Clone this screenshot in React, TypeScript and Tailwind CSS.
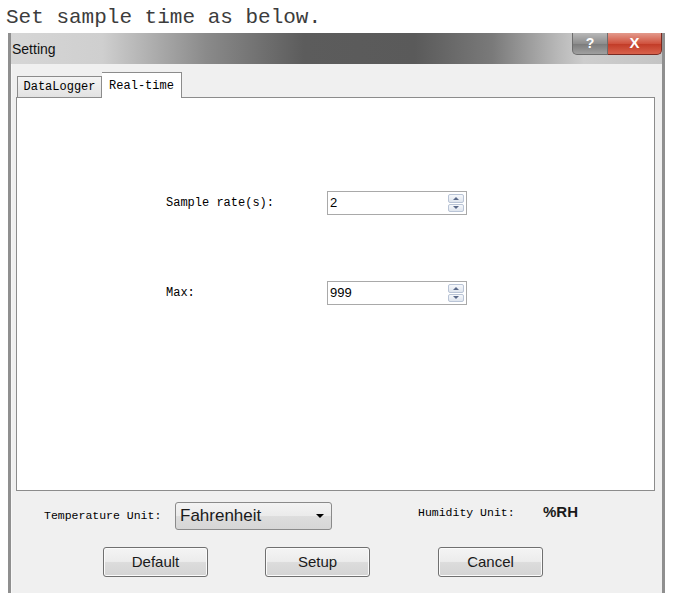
import React from "react";

const mono = { fontFamily: '"Liberation Mono", "DejaVu Sans Mono", monospace' };

function Spin() {
  return (
    <div className="flex flex-col w-[16px] h-[18px] mr-[2px] gap-[1px]">
      <div className="flex-1 flex items-center justify-center border border-[#b9c4d6] rounded-[2px] bg-[linear-gradient(#f6f8fb,#dfe5ee)]">
        <div className="w-0 h-0 border-x-[3px] border-x-transparent border-b-[3px] border-b-[#5b6a8a]" />
      </div>
      <div className="flex-1 flex items-center justify-center border border-[#b9c4d6] rounded-[2px] bg-[linear-gradient(#f6f8fb,#dfe5ee)]">
        <div className="w-0 h-0 border-x-[3px] border-x-transparent border-t-[3px] border-t-[#5b6a8a]" />
      </div>
    </div>
  );
}

function NumField({ value }: { value: string }) {
  return (
    <div className="w-[140px] h-[24px] border border-[#a9a9a9] bg-white flex items-center justify-between">
      <span className="pl-[2px] text-[13px] text-black" style={{ fontFamily: '"Liberation Sans", Arial, sans-serif' }}>
        {value}
      </span>
      <Spin />
    </div>
  );
}

function Btn({ label }: { label: string }) {
  return (
    <div
      className="w-[105px] h-[30px] rounded-[3px] border border-[#707070] bg-[linear-gradient(#f4f4f4_0%,#ececec_48%,#dcdcdc_52%,#d4d4d4_100%)] flex items-center justify-center text-[15px] text-[#1a1a1a] shadow-[inset_0_0_0_1px_#fbfbfb]"
      style={{ fontFamily: '"Liberation Sans", Arial, sans-serif' }}
    >
      {label}
    </div>
  );
}

export default function App() {
  return (
    <div className="w-[685px] h-[599px] bg-white overflow-hidden flex flex-col">
      <div className="h-[33px] pl-[6px] text-[21px] leading-[36px] text-[#3c3c3c] whitespace-pre" style={mono}>
        Set sample time as below.
      </div>
      <div className="ml-[8px] w-[657px] h-[560px] flex flex-col border-x-[3px] border-x-[#8f8f8f]">
        {/* title bar */}
        <div className="h-[31px] flex justify-between bg-[linear-gradient(90deg,#d6d6d6_0%,#cfcfcf_14%,#8a8a8a_30%,#5c5c5c_45%,#5a5a5a_62%,#7a7a7a_74%,#b8b8b8_84%,#cdcdcd_88%,#c4c4c4_100%)]">
          <div className="pl-[1px] pt-[6px] text-[14px] text-[#111]" style={{ fontFamily: '"Liberation Sans", Arial, sans-serif' }}>
            Setting
          </div>
          <div className="flex h-[22px]">
            <div className="w-[36px] h-full rounded-bl-[5px] border border-[#6d6d6d] border-t-0 bg-[linear-gradient(#b8b8b8,#8e8e8e_50%,#7a7a7a_51%,#a0a0a0)] flex items-center justify-center text-white text-[14px] font-bold" style={{ fontFamily: '"Liberation Sans", Arial, sans-serif' }}>
              ?
            </div>
            <div className="w-[54px] h-full rounded-br-[5px] border border-[#7a2a22] border-t-0 border-l-0 bg-[linear-gradient(#e39a8c,#d0533f_50%,#c13a26_51%,#d8624c)] flex items-center justify-center text-white text-[15px] font-bold" style={{ fontFamily: '"Liberation Sans", Arial, sans-serif' }}>
              X
            </div>
          </div>
        </div>
        {/* body */}
        <div className="flex-1 bg-[#f0f0f0] border-l border-l-[#f8f8f8] flex flex-col">
          {/* tabs */}
          <div className="flex items-end h-[33px] pl-[5px] pt-[7px]">
            <div className="w-[85px] h-[21px] border border-[#8c8c8c] border-b-0 bg-[linear-gradient(#f4f4f4,#e2e2e2)] flex items-center justify-center text-[12px] text-black" style={mono}>
              DataLogger
            </div>
            <div className="w-[80px] h-[26px] border border-[#8c8c8c] border-b-0 border-l-0 bg-white flex items-start justify-center pt-[4px] text-[12px] text-black relative top-[1px]" style={mono}>
              Real-time
            </div>
          </div>
          <div className="ml-[4px] w-[639px] h-[394px] bg-white border border-[#8c8c8c] flex flex-col">
            <div className="h-[93px]" />
            <div className="flex items-center">
              <div className="w-[149px]" />
              <div className="w-[161px] text-[12px] text-black" style={mono}>
                Sample rate(s):
              </div>
              <NumField value="2" />
            </div>
            <div className="h-[66px]" />
            <div className="flex items-center">
              <div className="w-[149px]" />
              <div className="w-[161px] text-[12px] text-black" style={mono}>
                Max:
              </div>
              <NumField value="999" />
            </div>
          </div>
          {/* unit row */}
          <div className="flex items-center mt-[11px] h-[28px] pl-[32px]">
            <div className="w-[131px] text-[11.5px] text-black" style={mono}>
              Temperature Unit:
            </div>
            <div
              className="w-[157px] h-[28px] rounded-[3px] border border-[#8a8a8a] bg-[linear-gradient(#f3f3f3_0%,#ebebeb_48%,#dddddd_52%,#d6d6d6_100%)] flex items-center justify-between pl-[4px] pr-[7px] text-[17px] text-[#1a1a1a]"
              style={{ fontFamily: '"Liberation Sans", Arial, sans-serif' }}
            >
              <span>Fahrenheit</span>
              <div className="w-0 h-0 border-x-[4px] border-x-transparent border-t-[4px] border-t-black" />
            </div>
            <div className="w-[86px]" />
            <div className="w-[125px] text-[11.5px] text-black -mt-[6px]" style={mono}>
              Humidity Unit:
            </div>
            <div className="text-[15px] font-bold text-[#1a1a1a] -mt-[8px]" style={{ fontFamily: '"Liberation Sans", Arial, sans-serif' }}>
              %RH
            </div>
          </div>
          {/* buttons */}
          <div className="flex items-center mt-[17px] pl-[91px]">
            <Btn label="Default" />
            <div className="w-[57px]" />
            <Btn label="Setup" />
            <div className="w-[68px]" />
            <Btn label="Cancel" />
          </div>
        </div>
      </div>
    </div>
  );
}
